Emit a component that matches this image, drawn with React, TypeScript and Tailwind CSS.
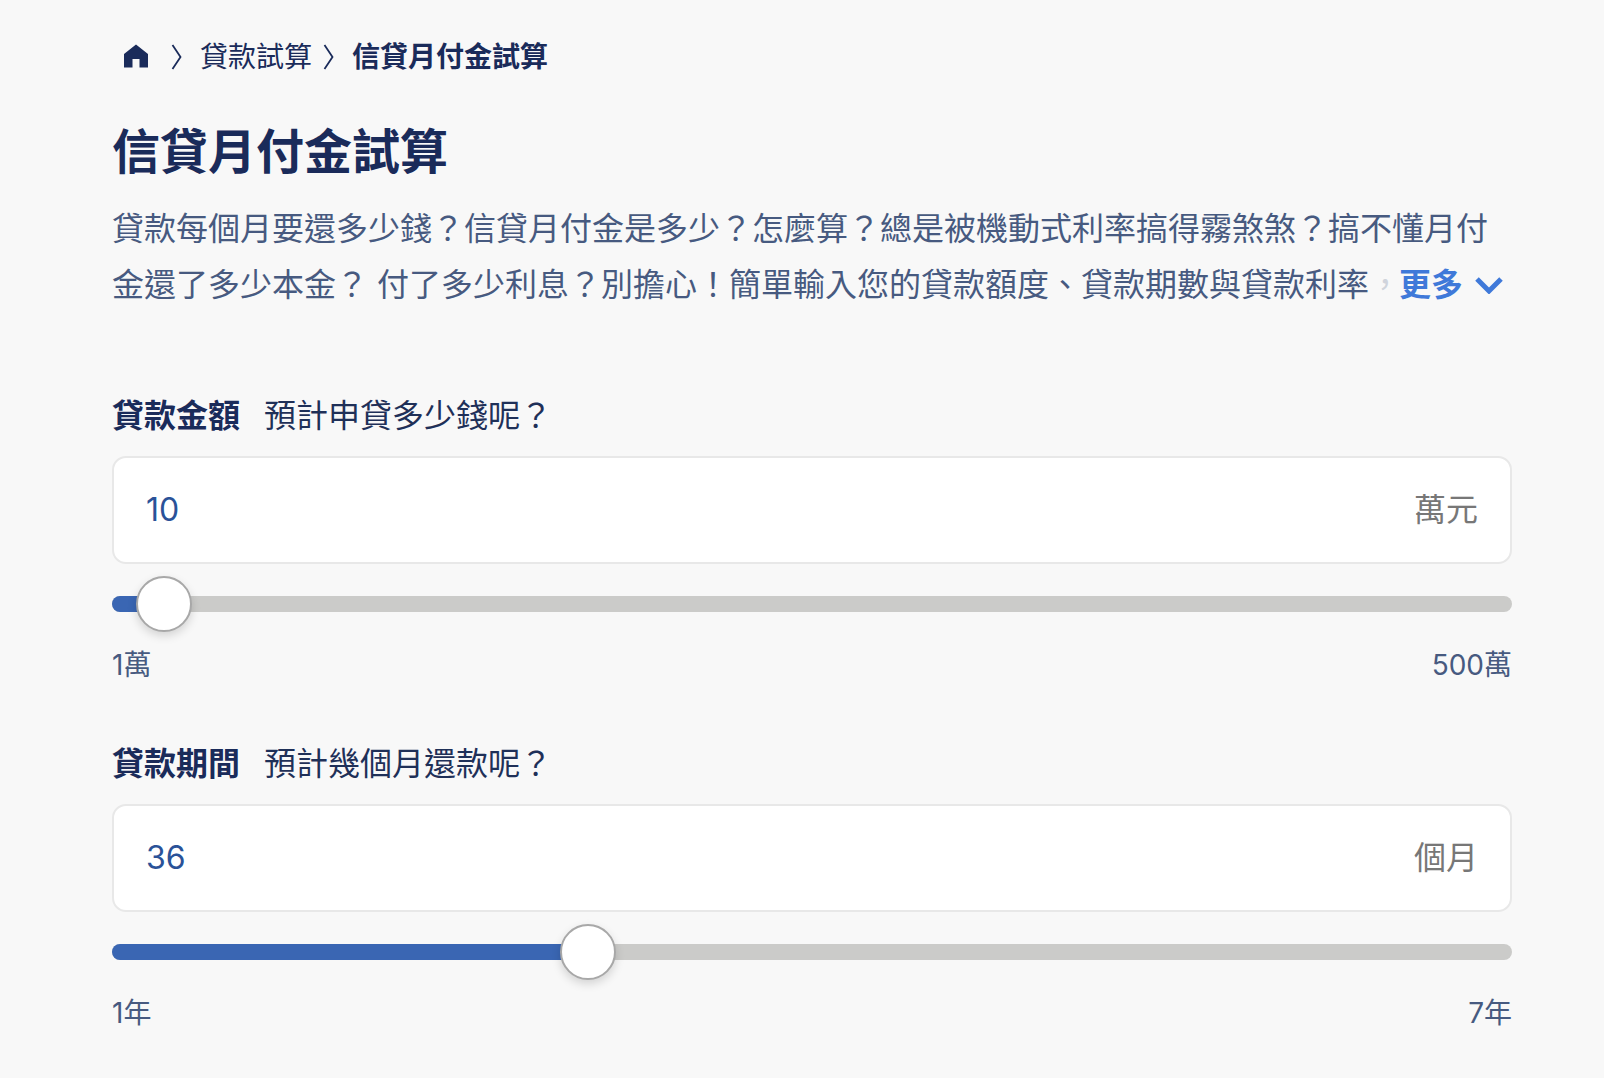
import React from "react";

function Field({ label, hint, value, unit, min, max, fill }: { label: string; hint: string; value: string; unit: string; min: string; max: string; fill: number }) {
  return (
    <section>
      <div className="flex items-center gap-[24px] text-[32px] leading-[48px] text-[#1a2b5a]">
        <span className="font-bold">{label}</span>
        <span className="font-normal text-[#1f3058]">{hint}</span>
      </div>
      <div className="mt-[16px] flex h-[108px] items-center justify-between rounded-[14px] border-2 border-[#e8e8e8] bg-white px-[32px]">
        <span className="text-[32px] text-[#2a5298]">{value}</span>
        <span className="text-[32px] text-[#777777]">{unit}</span>
      </div>
      <div className="relative mt-[32px] h-4 rounded-full bg-[#cbcbc9]">
        <div className="h-4 rounded-l-full bg-[#3a66b3]" style={{ width: fill + 28 }} />
        <div
          className="absolute top-[-20px] h-14 w-14 rounded-full border-2 border-[#a8a8a8] bg-white shadow-[0_4px_10px_rgba(0,0,0,0.15)]"
          style={{ left: fill }}
        />
      </div>
      <div className="mt-[32px] flex justify-between text-[28px] leading-[42px] text-[#475a80]">
        <span>{min}</span>
        <span>{max}</span>
      </div>
    </section>
  );
}

export default function App() {
  return (
    <div className="min-h-[1078px] bg-[#f8f8f8] font-['Inter','Noto_Sans_CJK_TC','Noto_Sans_CJK_JP',sans-serif] text-[#1a2b5a]">
      <div className="w-[1604px] pl-[112px] pr-[92px] pt-[37px]">
        <nav className="flex h-[40px] items-center pl-[11px] text-[28px] leading-[40px]">
          <svg width="26" height="24" viewBox="0 0 26 24" className="mt-[-2px]" fill="#1a2b5a">
            <path d="M13 0.5 L25 10 L25 23.5 L16.5 23.5 L16.5 15 L9.5 15 L9.5 23.5 L1 23.5 L1 10 Z" strokeLinejoin="round" />
          </svg>
          <svg width="12" height="28" viewBox="0 0 12 28" className="ml-[22px]" fill="none" stroke="#1a2b5a" strokeWidth="1.8">
            <path d="M1.5 2 L9.5 14 L1.5 26" />
          </svg>
          <span className="ml-[17px]">貸款試算</span>
          <svg width="12" height="28" viewBox="0 0 12 28" className="ml-[11px]" fill="none" stroke="#1a2b5a" strokeWidth="1.8">
            <path d="M1.5 2 L9.5 14 L1.5 26" />
          </svg>
          <span className="ml-[17px] font-bold">信貸月付金試算</span>
        </nav>
        <h1 className="mt-[39px] text-[48px] font-bold leading-[72px]">信貸月付金試算</h1>
        <div className="mt-[13px] h-[112px] text-[32px] leading-[56px] text-[#475a80]">
          <p className="whitespace-nowrap">貸款每個月要還多少錢？信貸月付金是多少？怎麼算？總是被機動式利率搞得霧煞煞？搞不懂月付</p>
          <p className="flex items-center whitespace-nowrap">
            金還了多少本金？ 付了多少利息？別擔心！簡單輸入您的貸款額度、貸款期數與貸款利率
            <span className="text-[#d0d4dc]">，</span>
            <span className="ml-[-2px] font-bold text-[#3f79d9]">更多</span>
            <svg width="28" height="18" viewBox="0 0 28 18" className="ml-[12px]" fill="none" stroke="#3f79d9" strokeWidth="5">
              <path d="M2 3 L14 15 L26 3" />
            </svg>
          </p>
        </div>
        <div className="mt-[79px] flex flex-col gap-[54px]">
          <Field label="貸款金額" hint="預計申貸多少錢呢？" value="10" unit="萬元" min="1萬" max="500萬" fill={24} />
          <Field label="貸款期間" hint="預計幾個月還款呢？" value="36" unit="個月" min="1年" max="7年" fill={448} />
        </div>
      </div>
    </div>
  );
}
